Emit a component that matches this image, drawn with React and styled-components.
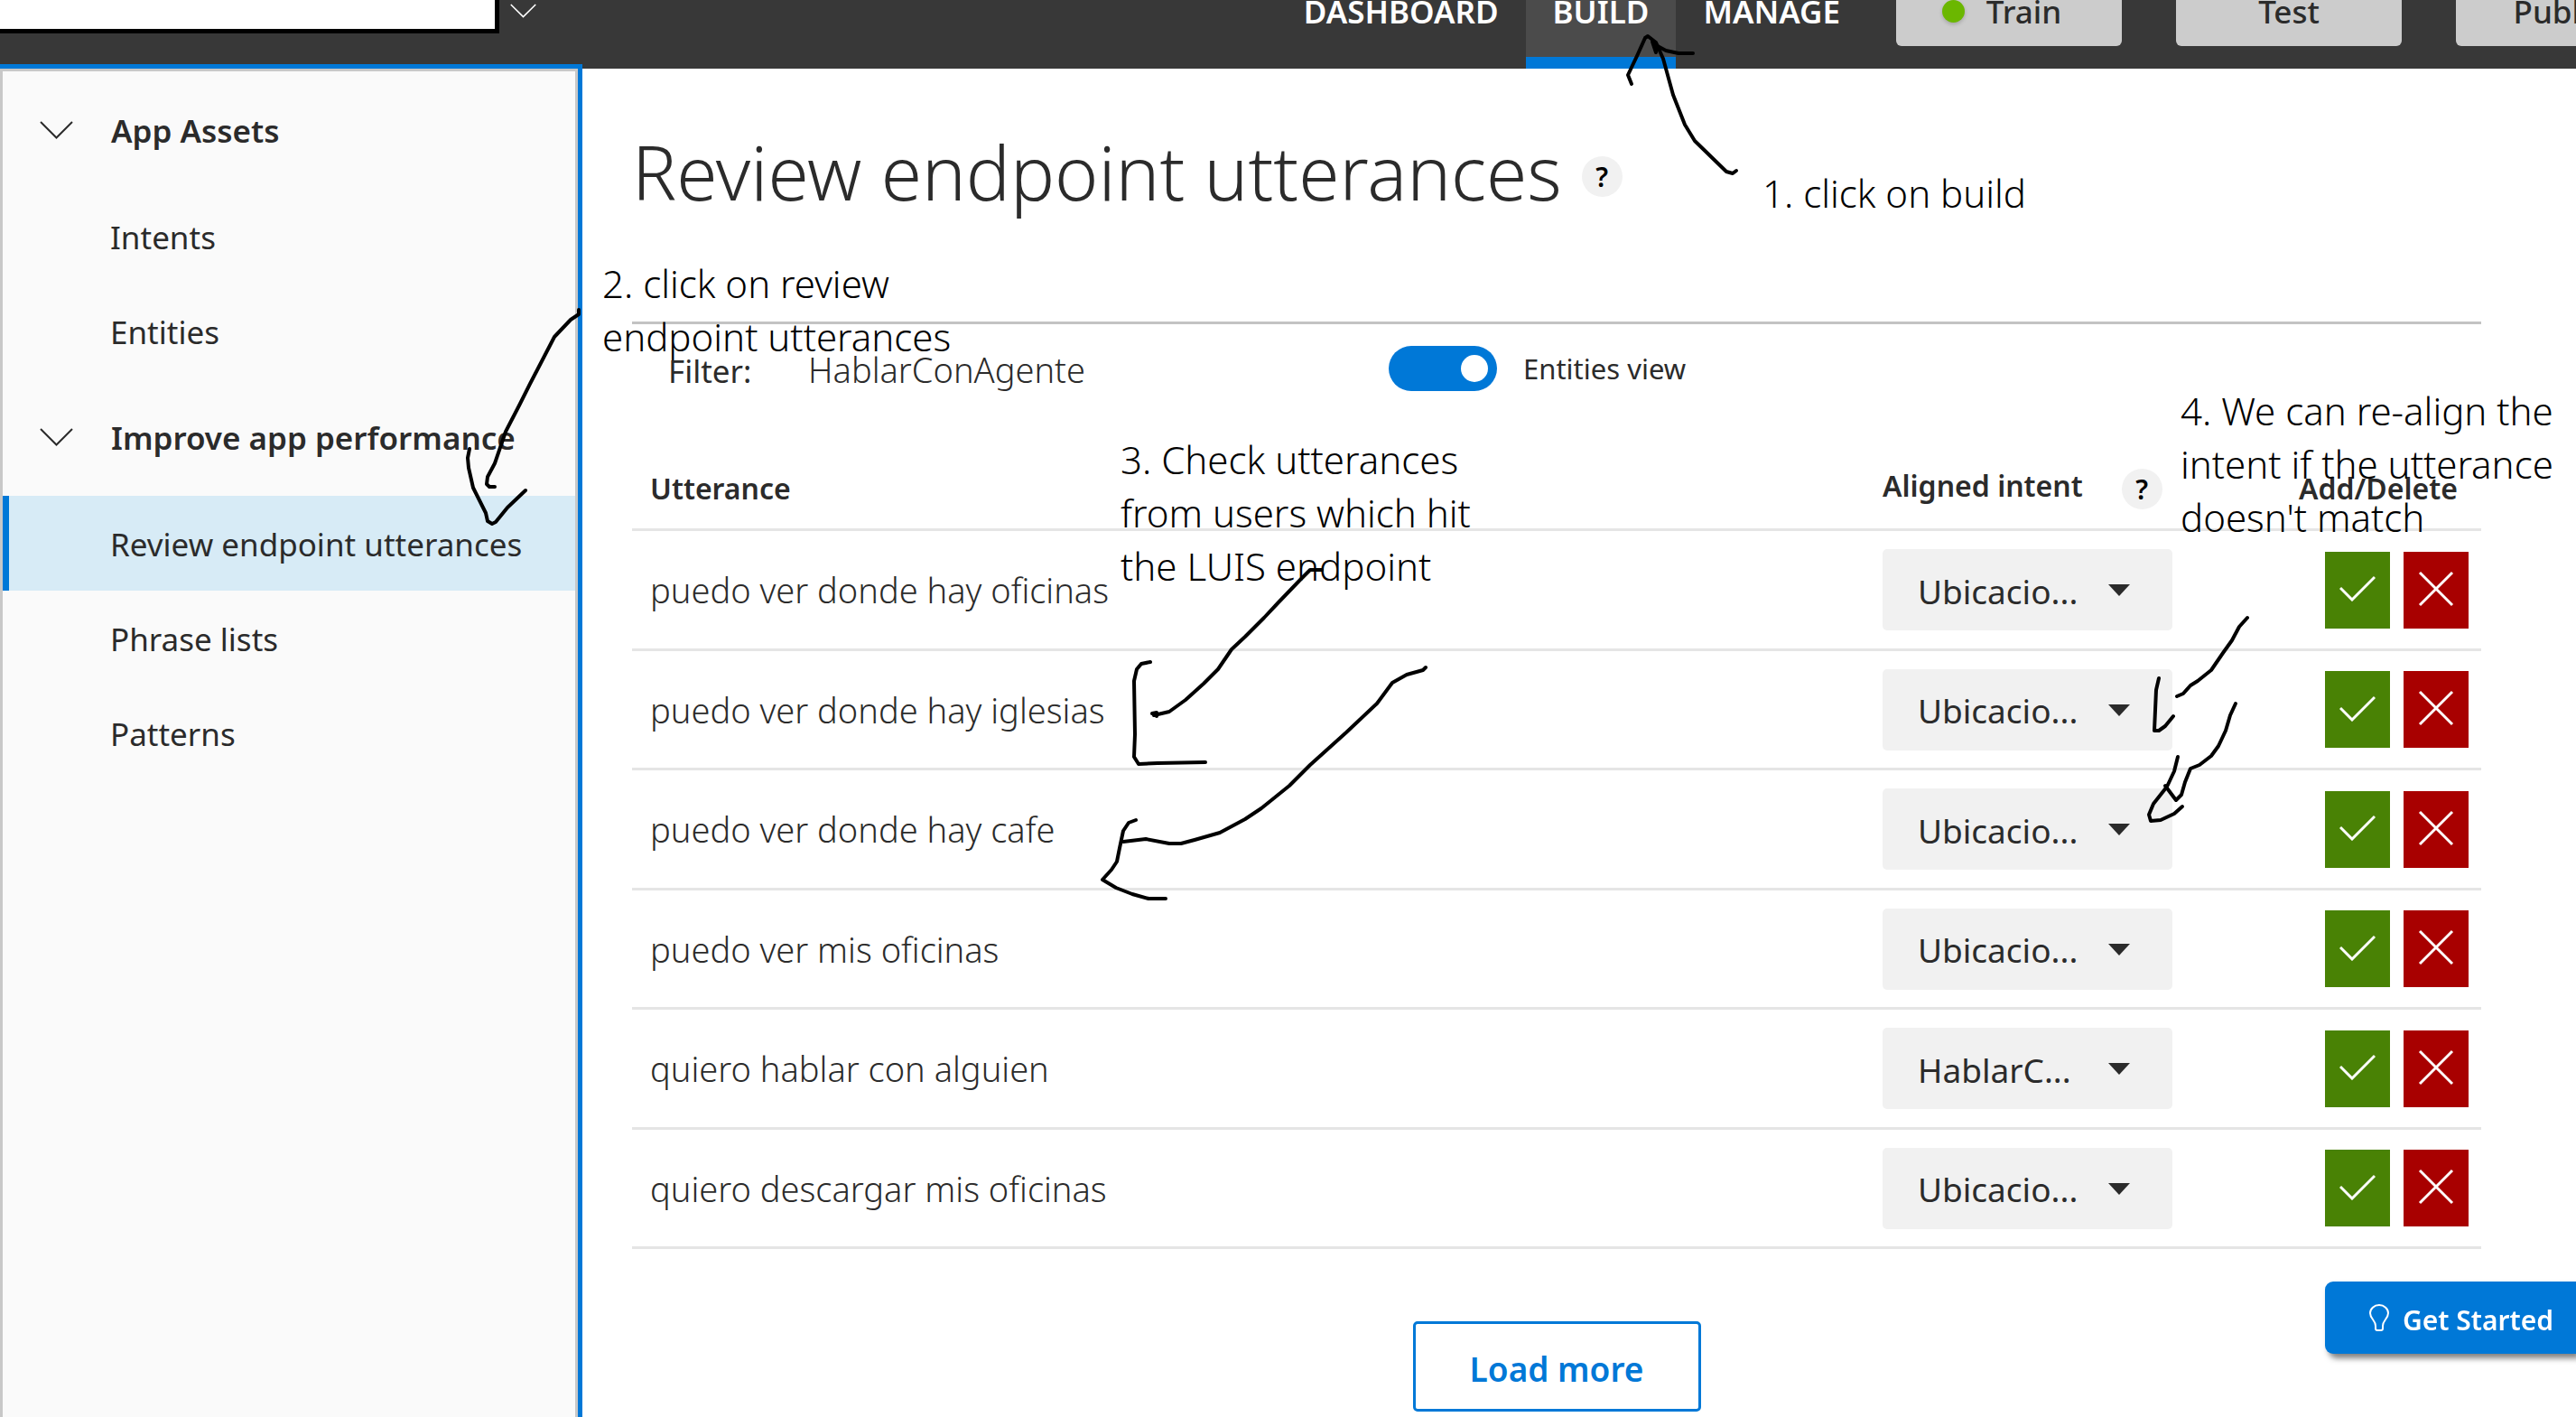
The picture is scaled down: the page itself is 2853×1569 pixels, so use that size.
import React, { useState } from 'react';
import styled, { createGlobalStyle, css } from 'styled-components';

const blue = '#0078d7';
const ink = '#2b2b2b';

const GlobalStyle = createGlobalStyle`
  *, *::before, *::after { box-sizing: border-box; }
  body {
    margin: 0;
    overflow-x: hidden;
    background: #fff;
    color: ${ink};
    font-family: "Noto Sans", "Open Sans", sans-serif;
    font-size: 35px;
  }
  button, input, select { font: inherit; color: inherit; margin: 0; }
`;

const Page = styled.div`
  position: relative;
  overflow: hidden;
  min-height: 100vh;
  display: flex;
  flex-direction: column;
`;

const TopBar = styled.header`
  display: flex;
  align-items: center;
  height: 128px;
  margin-top: -52px;
  background: #383838;
`;

const AppName = styled.div`
  align-self: flex-start;
  width: 553px;
  height: 89px;
  background: #fff;
  border: solid #000;
  border-width: 0 5px 5px 0;
`;

const AppMenuButton = styled.button`
  display: flex;
  padding: 0;
  margin-left: 12px;
  border: 0;
  background: none;
  color: #fff;
`;

const TopNav = styled.nav`
  display: flex;
  align-self: stretch;
  margin-left: auto;
`;

const TopLink = styled.a`
  display: flex;
  align-items: center;
  padding: 0 30px;
  border: solid transparent;
  border-width: 13px 0;
  color: #fff;
  font-weight: 600;
  text-decoration: none;
  ${(p) => p.$active && css`
    background: #4b4b4b;
    border-top-color: #4b4b4b;
    border-bottom-color: ${blue};
  `}
`;

const TopActions = styled.div`
  display: flex;
  gap: 60px;
  margin-left: 32px;
  margin-right: -117px;
`;

const TopButton = styled.button`
  display: flex;
  align-items: center;
  justify-content: center;
  gap: 24px;
  width: 250px;
  height: 78px;
  padding: 0 ${(p) => (p.$dot ? '16px' : 0)} 0 0;
  border: 0;
  border-radius: 6px;
  background: #ccc;
  color: ${ink};
  font-weight: 500;
`;

const StatusDot = styled.span`
  width: 25px;
  height: 25px;
  border-radius: 50%;
  background: #6bb700;
  box-shadow: 0 2px 4px rgba(0, 0, 0, 0.2);
`;

const Layout = styled.div`
  flex: 1;
  display: flex;
`;

const Sidebar = styled.aside`
  flex: 0 0 645px;
  margin-top: -5px;
  border: solid ${blue};
  border-width: 5px 5px 0 0;
  display: flex;
`;

const SidebarPanel = styled.nav`
  flex: 1;
  border: 3px solid #c8c8c8;
  border-bottom: 0;
  background: #fafafa;
`;

const GroupButton = styled.button`
  display: flex;
  align-items: center;
  width: 100%;
  height: 130px;
  padding: 0 0 0 41px;
  border: 0;
  background: none;
  font-weight: 600;
  text-align: left;
  svg { margin-right: 42px; }
`;

const SideLink = styled.a`
  display: flex;
  align-items: center;
  height: 105px;
  padding: 2px 0 0 112px;
  border-left: 7px solid ${(p) => (p.$active ? blue : 'transparent')};
  background: ${(p) => (p.$active ? '#d7ebf6' : 'transparent')};
  color: ${ink};
  text-decoration: none;
`;

const Main = styled.main`
  flex: 1;
  min-width: 0;
  padding: 59px 105px 6px 55px;
`;

const TitleRow = styled.div`
  display: flex;
  align-items: center;
  gap: 22px;
  padding-bottom: 111px;
  border-bottom: 3px solid #c3c3c3;
`;

const Title = styled.h1`
  margin: 0;
  font-size: 82px;
  line-height: 110px;
  font-weight: 300;
`;

const HelpButton = styled.button`
  width: 45px;
  height: 45px;
  padding: 0;
  margin-top: ${(p) => (p.$low ? '10px' : 0)};
  border: 0;
  border-radius: 50%;
  background: #f1f1f1;
  color: #000;
  font-size: 30px;
  line-height: 45px;
  font-weight: 600;
`;

const FilterRow = styled.div`
  display: flex;
  align-items: center;
  height: 98px;
`;

const FilterField = styled.div`
  display: flex;
  align-items: baseline;
  width: 838px;
  padding: 2px 0 0 40px;
`;

const FilterLabel = styled.label`
  width: 155px;
`;

const FilterSelect = styled.select`
  appearance: none;
  padding: 0;
  border: 0;
  background: none;
  font-size: 38px;
  font-weight: 300;
`;

const ToggleLabel = styled.label`
  display: flex;
  align-items: center;
  gap: 29px;
  font-size: 31px;
`;

const Toggle = styled.input`
  appearance: none;
  display: flex;
  align-items: center;
  justify-content: ${(p) => (p.checked ? 'flex-end' : 'flex-start')};
  width: 120px;
  height: 50px;
  padding: 0 10px;
  border-radius: 25px;
  background: ${(p) => (p.checked ? blue : '#8a8a8a')};
  &::before {
    content: '';
    width: 30px;
    height: 30px;
    border-radius: 50%;
    background: #fff;
  }
`;

const Table = styled.table`
  width: 100%;
  table-layout: fixed;
  border-spacing: 0;
`;

const HeadCell = styled.th`
  width: ${(p) => p.$width || 'auto'};
  height: 131px;
  padding: 40px 0 0 ${(p) => p.$inset || 0};
  border-bottom: 3px solid #e5e5e5;
  font-size: 32px;
  line-height: 38px;
  font-weight: 600;
  text-align: left;
`;

const HeadWithHelp = styled.div`
  display: flex;
  align-items: flex-start;
  gap: 43px;
`;

const Row = styled.tr`
  height: 133px;
  &:nth-child(even) { height: 132px; }
`;

const Cell = styled.td`
  padding: 0 0 0 ${(p) => p.$inset || 0};
  border-bottom: 3px solid #e5e5e5;
  font-size: 38px;
  font-weight: 300;
`;

const IntentBox = styled.div`
  position: relative;
  width: 321px;
`;

const IntentSelect = styled.select`
  appearance: none;
  display: block;
  width: 100%;
  height: 90px;
  padding: 2px 80px 0 39px;
  border: 0;
  border-radius: 5px;
  background: #f1f1f1;
  font-size: 37px;
  font-weight: 400;
`;

const Caret = styled.svg`
  position: absolute;
  right: 47px;
  top: 39px;
  pointer-events: none;
`;

const RowActions = styled.div`
  display: flex;
  gap: 15px;
`;

const ActionButton = styled.button`
  display: flex;
  align-items: center;
  justify-content: center;
  width: 72px;
  height: 85px;
  padding: 0 0 3px;
  border: 0;
  background: ${(p) => (p.$danger ? '#a80000' : '#498205')};
`;

const LoadMore = styled.button`
  display: block;
  width: 319px;
  height: 100px;
  margin: 80px auto 0;
  padding: 4px 0 0;
  border: 3px solid ${blue};
  border-radius: 5px;
  background: #fff;
  color: ${blue};
  font-size: 37px;
  font-weight: 600;
`;

const GetStarted = styled.button`
  position: fixed;
  right: 0;
  bottom: 70px;
  display: flex;
  align-items: center;
  gap: 14px;
  width: 278px;
  height: 80px;
  padding: 4px 0 0 48px;
  border: 0;
  border-radius: 9px 0 0 9px;
  background: ${blue};
  color: #fff;
  font-size: 30px;
  font-weight: 600;
  box-shadow: 4px 5px 6px rgba(0, 0, 0, 0.5);
  svg { margin-bottom: 4px; }
`;

/* Hand-made notes lie over the whole page. */
const Note = styled.p`
  position: absolute;
  left: ${(p) => p.$x}px;
  top: ${(p) => p.$y}px;
  margin: 0;
  color: #000;
  font-size: 42px;
  line-height: 59px;
  font-weight: 300;
  white-space: pre-line;
  pointer-events: none;
`;

const Ink = styled.svg`
  position: absolute;
  left: 0;
  top: 0;
  pointer-events: none;
  polyline {
    fill: none;
    stroke: #000;
    stroke-width: 4;
    stroke-linecap: round;
    stroke-linejoin: round;
  }
`;

const Chevron = ({ width, height }) => (
  <svg width={width} height={height} viewBox="0 0 37 20" fill="none" stroke="currentColor" strokeWidth="2" aria-hidden="true">
    <path d="M1 1 L18.5 18.5 L36 1" />
  </svg>
);

const CheckIcon = () => (
  <svg width="40" height="29" viewBox="0 0 40 29" fill="none" stroke="#fff" strokeWidth="3" aria-hidden="true">
    <path d="M1 14 L14 27 L39 2" />
  </svg>
);

const CrossIcon = () => (
  <svg width="40" height="40" viewBox="0 0 40 40" fill="none" stroke="#fff" strokeWidth="3" aria-hidden="true">
    <path d="M2 2 L38 38 M38 2 L2 38" />
  </svg>
);

const BulbIcon = () => (
  <svg width="24" height="32" viewBox="0 0 24 32" fill="none" stroke="#fff" strokeWidth="2" aria-hidden="true">
    <path d="M8 25 C8 19 2 17 2 11 A10 9 0 0 1 22 11 C22 17 16 19 16 25 V28 Q16 30 14 30 H10 Q8 30 8 28 Z" />
  </svg>
);

const groups = [
  { title: 'App Assets', items: ['Intents', 'Entities'] },
  { title: 'Improve app performance', items: ['Review endpoint utterances', 'Phrase lists', 'Patterns'] },
];

const utterances = [
  ['puedo ver donde hay oficinas', 'Ubicacio...'],
  ['puedo ver donde hay iglesias', 'Ubicacio...'],
  ['puedo ver donde hay cafe', 'Ubicacio...'],
  ['puedo ver mis oficinas', 'Ubicacio...'],
  ['quiero hablar con alguien', 'HablarC...'],
  ['quiero descargar mis oficinas', 'Ubicacio...'],
];

const notes = [
  { x: 1952, y: 184, text: '1. click on build' },
  { x: 667, y: 284, text: '2. click on review\nendpoint utterances' },
  { x: 1241, y: 479, text: '3. Check utterances\nfrom users which hit\nthe LUIS endpoint' },
  { x: 2415, y: 425, text: "4. We can re-align the\nintent if the utterance\ndoesn't match" },
];

const strokes = [
  '1923,189 1919,192 1912,190 1877,156 1866,138 1853,105 1842,65 1834,47 1825,40 1822,42 1813,62 1803,83 1807,93',
  '1830,46 1834,58 1834,50 1845,56 1859,59 1875,59',
  '641,343 641,348 632,354 614,373 600,400 587,425 576,447 560,478 548,513 540,528 539,536 542,539 548,539',
  '520,497 518,507 519,518 524,540 538,568 540,577 545,580 549,578 562,562 582,543',
  '1464,631 1451,631 1440,642 1415,668 1400,684 1379,705 1364,719 1349,741 1333,757 1313,775 1295,788 1278,792',
  '1276,790 1281,789 1281,793',
  '1274,733 1264,735 1259,741 1256,754 1257,813 1256,838 1261,846 1282,845 1335,844',
  '1579,739 1576,742 1558,747 1542,756 1525,779 1491,811 1451,847 1428,870 1397,895 1379,907 1351,922 1323,930 1308,934 1295,934 1269,929 1244,932',
  '1258,908 1250,911 1244,920 1240,939 1237,954 1231,963 1221,974 1236,983 1254,990 1272,995 1291,995',
  '2489,684 2480,694 2472,709 2462,723 2449,742 2434,754 2426,759 2418,768 2411,771',
  '2391,751 2388,764 2386,809 2391,809 2398,804 2407,793',
  '2476,779 2470,792 2465,809 2457,826 2449,837 2436,847 2426,851 2420,866 2416,880 2410,886 2404,878 2398,870',
  '2412,838 2408,854 2400,871 2385,890 2380,902 2382,909 2393,908 2408,901 2417,893',
];

export default function App() {
  const [entitiesView, setEntitiesView] = useState(true);

  return (
    <>
      <GlobalStyle />
      <Page>
        <TopBar>
          <AppName />
          <AppMenuButton aria-label="Choose app">
            <Chevron width={29} height={16} />
          </AppMenuButton>
          <TopNav>
            <TopLink href="#dashboard">DASHBOARD</TopLink>
            <TopLink href="#build" $active>BUILD</TopLink>
            <TopLink href="#manage">MANAGE</TopLink>
          </TopNav>
          <TopActions>
            <TopButton $dot><StatusDot />Train</TopButton>
            <TopButton>Test</TopButton>
            <TopButton>Publish</TopButton>
          </TopActions>
        </TopBar>

        <Layout>
          <Sidebar>
            <SidebarPanel>
              {groups.map((group) => (
                <div key={group.title}>
                  <GroupButton>
                    <Chevron width={37} height={20} />
                    {group.title}
                  </GroupButton>
                  {group.items.map((item) => (
                    <SideLink key={item} href="#" $active={item === 'Review endpoint utterances'}>
                      {item}
                    </SideLink>
                  ))}
                </div>
              ))}
            </SidebarPanel>
          </Sidebar>

          <Main>
            <TitleRow>
              <Title>Review endpoint utterances</Title>
              <HelpButton $low>?</HelpButton>
            </TitleRow>

            <FilterRow>
              <FilterField>
                <FilterLabel htmlFor="filter">Filter:</FilterLabel>
                <FilterSelect id="filter">
                  <option>HablarConAgente</option>
                </FilterSelect>
              </FilterField>
              <ToggleLabel>
                <Toggle
                  type="checkbox"
                  role="switch"
                  checked={entitiesView}
                  onChange={(e) => setEntitiesView(e.target.checked)}
                />
                Entities view
              </ToggleLabel>
            </FilterRow>

            <Table>
              <thead>
                <tr>
                  <HeadCell $inset="20px">Utterance</HeadCell>
                  <HeadCell $width="461px">
                    <HeadWithHelp>
                      Aligned intent
                      <HelpButton>?</HelpButton>
                    </HeadWithHelp>
                  </HeadCell>
                  <HeadCell $width="202px">Add/Delete</HeadCell>
                </tr>
              </thead>
              <tbody>
                {utterances.map(([text, intent]) => (
                  <Row key={text}>
                    <Cell $inset="20px">{text}</Cell>
                    <Cell>
                      <IntentBox>
                        <IntentSelect aria-label={`Aligned intent: ${text}`}>
                          <option>{intent}</option>
                        </IntentSelect>
                        <Caret width="24" height="13" viewBox="0 0 24 13" fill={ink} aria-hidden="true">
                          <path d="M0 0 H24 L12 13 Z" />
                        </Caret>
                      </IntentBox>
                    </Cell>
                    <Cell $inset="29px">
                      <RowActions>
                        <ActionButton aria-label="Add"><CheckIcon /></ActionButton>
                        <ActionButton aria-label="Delete" $danger><CrossIcon /></ActionButton>
                      </RowActions>
                    </Cell>
                  </Row>
                ))}
              </tbody>
            </Table>

            <LoadMore>Load more</LoadMore>
          </Main>
        </Layout>

        <GetStarted><BulbIcon />Get Started</GetStarted>

        {notes.map((note) => (
          <Note key={note.text} $x={note.x} $y={note.y}>{note.text}</Note>
        ))}
        <Ink width="2853" height="1100" viewBox="0 0 2853 1100" aria-hidden="true">
          {strokes.map((points) => <polyline key={points} points={points} />)}
        </Ink>
      </Page>
    </>
  );
}
